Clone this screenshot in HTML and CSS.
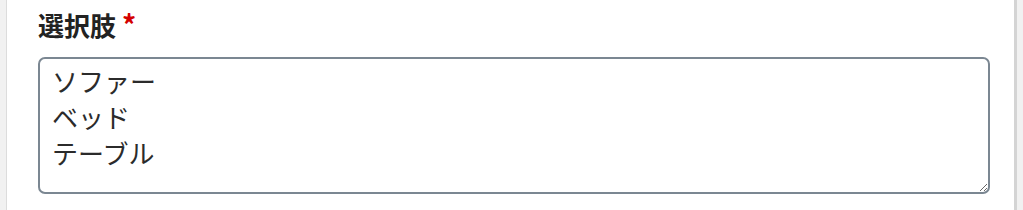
FILE: index.html
```html
<!DOCTYPE html>
<html lang="ja">
<head>
  <meta charset="UTF-8" />
  <meta name="viewport" content="width=device-width, initial-scale=1.0" />
  <title>選択肢</title>
  <link rel="stylesheet" href="styles.css">
</head>
<body>
  <div class="panel">
    <div class="field">
      <label class="field-label" for="choices">選択肢 <span class="required">*</span></label>
      <textarea class="field-input" id="choices" rows="3">ソファー
ベッド
テーブル</textarea>
    </div>
  </div>
</body>
</html>
```

FILE: styles.css
```css
html, body {
  margin: 0;
  padding: 0;
  background-color: #f1f1f1;
}
body {
  padding-left: 6px;
  font-family: "Noto Sans CJK JP", "Noto Sans", sans-serif;
}
.panel {
  width: 1011px;
  height: 210px;
  background-color: #fff;
  border-left: 1px solid #dcdcdc;
  border-right: 3px solid #d4d4d4;
  box-sizing: border-box;
  padding: 6px 30px 0 31px;
}
.field {
  display: flex;
  flex-direction: column;
  gap: 14px;
}
.field-label {
  font-size: 26px;
  font-weight: bold;
  color: #222;
  line-height: 36px;
}
.required {
  color: #d40000;
  font-size: 28px;
}
.field-input {
  display: block;
  width: 952px;
  height: 137px;
  box-sizing: border-box;
  border: 2px solid #7b8792;
  border-radius: 7px;
  padding: 4px 12px;
  font-family: "Noto Sans CJK JP", "Noto Sans", sans-serif;
  font-size: 26px;
  line-height: 36px;
  color: #2b2b2b;
  resize: vertical;
}
```
